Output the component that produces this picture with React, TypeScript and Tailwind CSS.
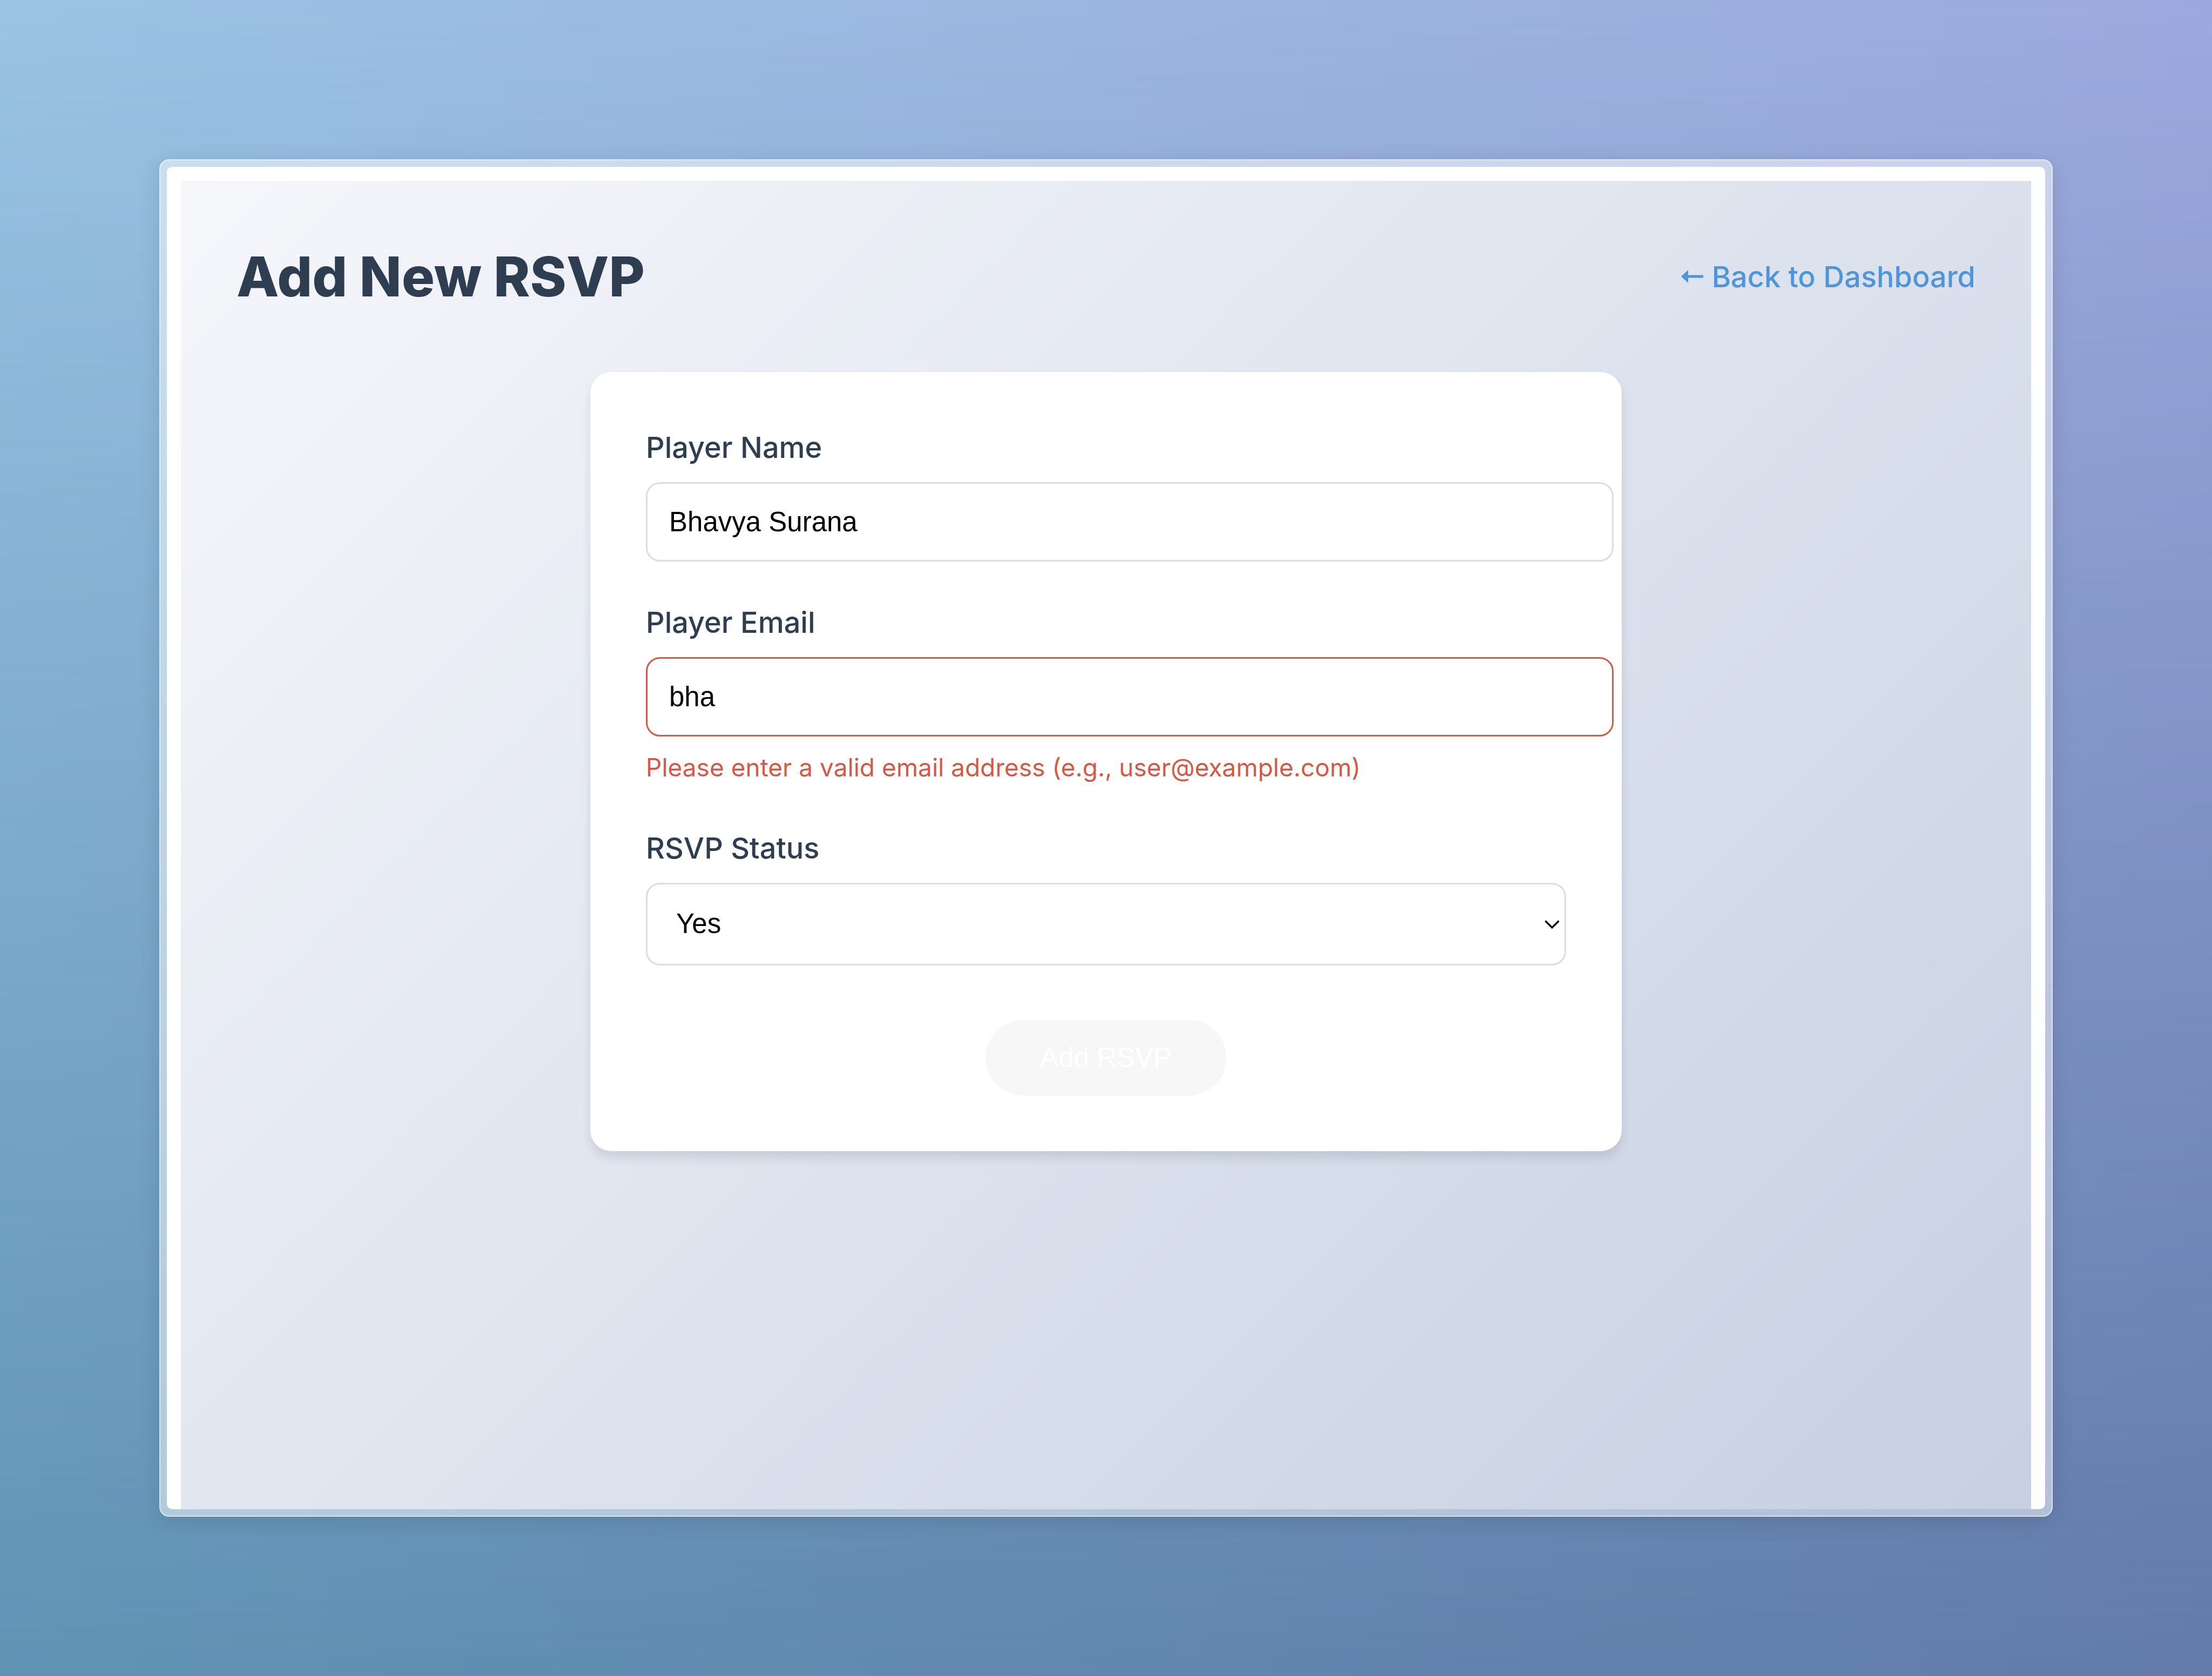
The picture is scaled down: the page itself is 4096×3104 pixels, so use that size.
import { useState } from "react";

const labelClass =
  "mb-7 block text-[54px] leading-[73px] font-medium text-[#2f3d50]";
const inputClass =
  "box-content block h-[59px] w-full rounded-[26px] border-3 bg-white py-[41px] pr-[42px] pl-10 font-['Liberation_Sans',sans-serif] text-[51px] leading-[59px] text-black outline-none";

export default function App() {
  const [name, setName] = useState("Bhavya Surana");
  const [email, setEmail] = useState("bha");
  const [status, setStatus] = useState("yes");

  return (
    <div className="relative isolate flex min-h-screen bg-linear-to-r from-[#6094b5] to-[#627bab] p-[295px] font-['Inter',sans-serif]">
      <div className="absolute inset-0 -z-10 bg-linear-to-r from-[#9ac3e3] to-[#9da9de] mask-b-from-0% mask-b-to-100%" />

      <div className="flex flex-1 rounded-[18px] border-2 border-white/50 bg-white/50 p-3 shadow-[0_8px_40px_rgba(0,0,0,0.12)]">
        <div className="flex flex-1 overflow-hidden rounded-[10px] border-x-26 border-t-26 border-white">
          <main className="flex-1 bg-[linear-gradient(135deg,#f6f7fb_0%,#c6d0e2_100%)] p-[103px]">
            <header className="mb-[103px] flex items-center justify-between">
              <h1 className="text-[102px] leading-[148px] font-extrabold text-[#2f3d50]">
                Add New RSVP
              </h1>
              <a
                href="#dashboard"
                className="flex items-center gap-4 text-[54px] leading-[77px] font-medium text-[#4f96d8]"
              >
                <svg
                  viewBox="0 0 41 24"
                  aria-hidden="true"
                  className="h-6 w-[41px]"
                >
                  <path
                    d="M0 12 L13 0 V9.5 H41 V14.5 H13 V24 Z"
                    fill="currentColor"
                  />
                </svg>
                Back to Dashboard
              </a>
            </header>

            <form
              noValidate
              onSubmit={(e) => e.preventDefault()}
              className="mx-auto w-full max-w-[1910px] rounded-[39px] bg-white p-[103px] shadow-[0_13px_19px_rgba(0,0,0,0.1)]"
            >
              <div className="mb-[76px]">
                <label htmlFor="player-name" className={labelClass}>
                  Player Name
                </label>
                <input
                  id="player-name"
                  type="text"
                  value={name}
                  onChange={(e) => setName(e.target.value)}
                  className={`${inputClass} border-[#dddddd]`}
                />
              </div>

              <div className="mb-[76px]">
                <label htmlFor="player-email" className={labelClass}>
                  Player Email
                </label>
                <input
                  id="player-email"
                  type="email"
                  value={email}
                  onChange={(e) => setEmail(e.target.value)}
                  aria-invalid="true"
                  aria-describedby="email-error"
                  className={`${inputClass} border-[#d15b4b]`}
                />
                <p
                  id="email-error"
                  className="mt-5 text-[46px] leading-[74px] text-[#d15b4b]"
                >
                  Please enter a valid email address (e.g., user@example.com)
                </p>
              </div>

              <div className="mb-[101px]">
                <label htmlFor="rsvp-status" className={labelClass}>
                  RSVP Status
                </label>
                <div className="relative">
                  <select
                    id="rsvp-status"
                    value={status}
                    onChange={(e) => setStatus(e.target.value)}
                    className="block h-[153px] w-full appearance-none rounded-[26px] border-3 border-[#dddddd] bg-white pr-16 pl-[53px] font-['Liberation_Sans',sans-serif] text-[51px] text-black outline-none"
                  >
                    <option value="yes">Yes</option>
                    <option value="no">No</option>
                    <option value="maybe">Maybe</option>
                  </select>
                  <svg
                    viewBox="0 0 28 16"
                    aria-hidden="true"
                    className="pointer-events-none absolute top-1/2 right-3 h-4 w-7 -translate-y-1/2"
                  >
                    <path
                      d="M1.5 1.5 L14 14 L26.5 1.5"
                      fill="none"
                      stroke="#111111"
                      strokeWidth="3.4"
                    />
                  </svg>
                </div>
              </div>

              <button
                type="submit"
                disabled
                className="mx-auto block rounded-full bg-[#f7f7f7] px-[101px] py-[41px] font-['Liberation_Sans',sans-serif] text-[51px] leading-[58px] text-white"
              >
                Add RSVP
              </button>
            </form>
          </main>
        </div>
      </div>
    </div>
  );
}
